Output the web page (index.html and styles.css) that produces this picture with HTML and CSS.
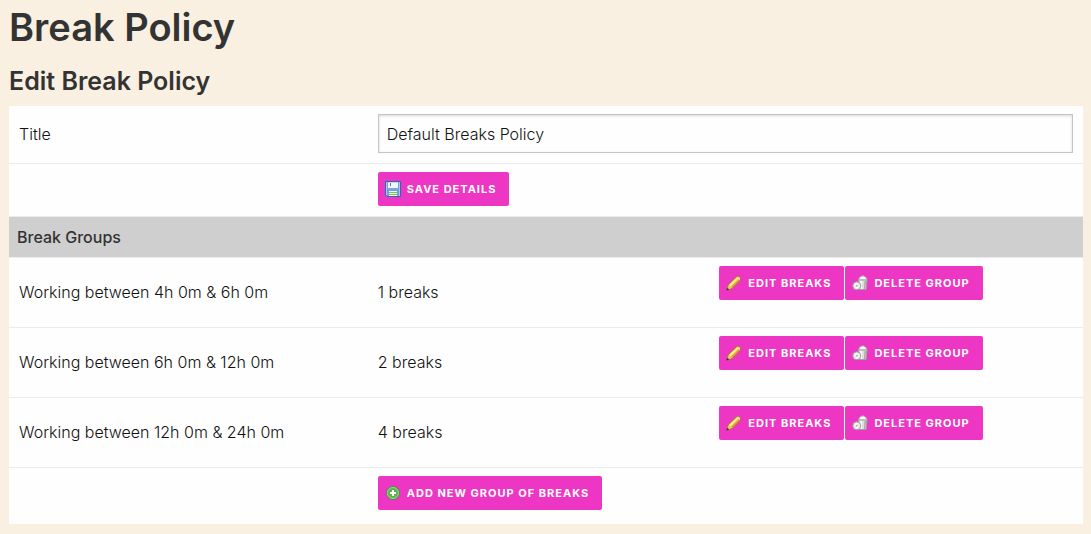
FILE: index.html
```html
<!DOCTYPE html>
<html lang="en">
<head>
  <meta charset="UTF-8" />
  <meta name="viewport" content="width=device-width, initial-scale=1.0" />
  <title>Break Policy</title>
  <link rel="stylesheet" href="styles.css">
</head>
<body>
  <svg class="sprite" aria-hidden="true">
    <symbol id="icon-save" viewBox="0 0 16 16">
      <path d="M.5.5h15v15H2L.5 14z" fill="#6f9fe0" stroke="#3464b5" />
      <path d="M1 1h1v13H1zM14 1h1v14h-1z" fill="#a9c9f2" />
      <path d="M3 1h10v6H3z" fill="#f1f6fd" />
      <path d="M3 1h10v1H3z" fill="#c3d8f3" />
      <path d="M5 2h1v3H5z" fill="#4a78bd" />
      <path d="M3 7h10v2H3z" fill="#79a7e6" />
      <path d="M4 10h8v5H4z" fill="#eef8e6" />
      <path d="M4 11h8v1H4zM4 13h8v1H4z" fill="#7cc252" />
    </symbol>
    <symbol id="icon-edit" viewBox="0 0 16 16">
      <path d="M1 15l1-5 8.500-8.200q1.500-1.300 3.200.200 1.800 1.600.400 3.200L6 13.500z" fill="#f3c64f" stroke="#a9742a" />
      <path d="M3 10l8-7.500 1.200 1.200L4.500 11.500z" fill="#fdeb9c" />
      <path d="M6 12.500l7.500-7.200-.800-.900-7.400 7.200z" fill="#dc9a34" />
      <path d="M10.500 2.500q1.500-1.300 2.800-.100 1.400 1.300.200 2.700z" fill="#f8d9a5" />
      <path d="M2 11l3 2.500L1.500 15z" fill="#e3bd8c" />
      <path d="M1.500 13l2 1.500L0 15.500z" fill="#3b2d22" />
    </symbol>
    <symbol id="icon-delete" viewBox="0 0 16 16">
      <path d="M6.500 5l1.500-3L11 .800l3 1.700 1 2.500z" fill="#f8f8f8" stroke="#b5b5b5" />
      <path d="M6.500 5h8.500l-1 9.500H7.500z" fill="#dedede" stroke="#a0a0a0" />
      <path d="M8 6h2v8H8z" fill="#fafafa" />
      <path d="M12.500 6H14l-.800 8.500h-1.200z" fill="#a5a5a5" />
      <circle cx="4.800" cy="10.800" r="4" fill="#ececec" stroke="#9a9a9a" />
      <path d="M2.500 10.500q1-2 3-1.500M4 12.800q2.200 0 2.700-1.600" fill="none" stroke="#fff" />
      <circle cx="4.800" cy="10.800" r="1" fill="#b5b5b5" />
    </symbol>
    <symbol id="icon-add" viewBox="0 0 16 16">
      <circle cx="8" cy="8" r="6.500" fill="#62b350" stroke="#4a8f45" />
      <circle cx="8" cy="8" r="5.500" fill="none" stroke="#9ed68c" />
      <path d="M7 5h2v2h2v2H9v2H7V9H5V7h2z" fill="#fff" />
    </symbol>
  </svg>

  <h1>Break Policy</h1>
  <h2>Edit Break Policy</h2>

  <form class="policy-form" onsubmit="return false">
    <table class="policy-table">
      <colgroup>
        <col class="col-label">
        <col class="col-value">
        <col class="col-actions">
      </colgroup>
      <tbody>
        <tr>
          <td><label for="policyTitle">Title</label></td>
          <td colspan="2"><input type="text" id="policyTitle" value="Default Breaks Policy" /></td>
        </tr>
        <tr>
          <td></td>
          <td colspan="2">
            <button type="submit" class="btn"><svg class="icon"><use href="#icon-save" /></svg>Save Details</button>
          </td>
        </tr>
        <tr>
          <th colspan="3">Break Groups</th>
        </tr>
        <tr>
          <td>Working between 4h 0m &amp; 6h 0m</td>
          <td>1 breaks</td>
          <td>
            <div class="actions">
              <button type="button" class="btn"><svg class="icon"><use href="#icon-edit" /></svg>Edit Breaks</button>
              <button type="button" class="btn"><svg class="icon"><use href="#icon-delete" /></svg>Delete Group</button>
            </div>
          </td>
        </tr>
        <tr>
          <td>Working between 6h 0m &amp; 12h 0m</td>
          <td>2 breaks</td>
          <td>
            <div class="actions">
              <button type="button" class="btn"><svg class="icon"><use href="#icon-edit" /></svg>Edit Breaks</button>
              <button type="button" class="btn"><svg class="icon"><use href="#icon-delete" /></svg>Delete Group</button>
            </div>
          </td>
        </tr>
        <tr>
          <td>Working between 12h 0m &amp; 24h 0m</td>
          <td>4 breaks</td>
          <td>
            <div class="actions">
              <button type="button" class="btn"><svg class="icon"><use href="#icon-edit" /></svg>Edit Breaks</button>
              <button type="button" class="btn"><svg class="icon"><use href="#icon-delete" /></svg>Delete Group</button>
            </div>
          </td>
        </tr>
        <tr class="last-row">
          <td></td>
          <td colspan="2">
            <button type="button" class="btn"><svg class="icon"><use href="#icon-add" /></svg>Add New Group Of Breaks</button>
          </td>
        </tr>
      </tbody>
    </table>
  </form>
</body>
</html>
```

FILE: styles.css
```css
:root {
  --bg-color: #faf0e1;
  --text-color: #111;
  --heading: #333;
  --primary: #ee36c4;
  --border: #ebebeb;
}
* {
  box-sizing: border-box;
}
body {
  background-color: var(--bg-color);
  color: var(--text-color);
  font-family: Inter, "Open Sans", sans-serif;
  font-size: 16px;
  font-weight: 300;
  line-height: 20px;
  margin: 0;
  padding: 0 8px 10px 9px;
}
.sprite {
  display: none;
}
h1, h2 {
  color: var(--heading);
  font-weight: 600;
  margin: 0;
}
h1 {
  font-size: 38px;
  line-height: 54px;
  margin-bottom: 10px;
}
h2 {
  font-size: 25px;
  line-height: 34px;
  margin-bottom: 8px;
}
.policy-table {
  width: 100%;
  table-layout: fixed;
  border-collapse: separate;
  border-spacing: 0;
  background: #fefefe;
}
.col-label {
  width: 33.5%;
}
.col-value {
  width: 31.8%;
}
.policy-table td {
  padding: 8px 10px 10px 9px;
  border-bottom: 1px solid var(--border);
}
.policy-table td:first-child {
  padding-left: 10px;
}
.policy-table th {
  background: #cfcfcf;
  color: var(--heading);
  font-weight: 500;
  text-align: left;
  padding: 10px 8px;
  border-bottom: 1px solid var(--border);
}
.policy-table .last-row td {
  padding-bottom: 14px;
  border-bottom: none;
}
input[type="text"] {
  display: block;
  width: 100%;
  height: 39px;
  padding: 0 8px;
  font: inherit;
  color: inherit;
  background: #fefefe;
  border: 1px solid #c4c4c4;
  border-radius: 0;
  box-shadow: inset 0 1px 3px rgba(0,0,0,0.15);
}
.actions {
  display: flex;
  gap: 1px;
  padding-bottom: 17px;
}
.btn {
  display: flex;
  align-items: center;
  gap: 6px;
  height: 34px;
  padding: 0 13px 0 7px;
  border: none;
  border-radius: 2px;
  background: var(--primary);
  color: #fff;
  font-family: inherit;
  font-size: 11px;
  font-weight: 700;
  letter-spacing: 1px;
  text-transform: uppercase;
  white-space: nowrap;
  cursor: pointer;
}
.icon {
  width: 16px;
  height: 16px;
}
```
